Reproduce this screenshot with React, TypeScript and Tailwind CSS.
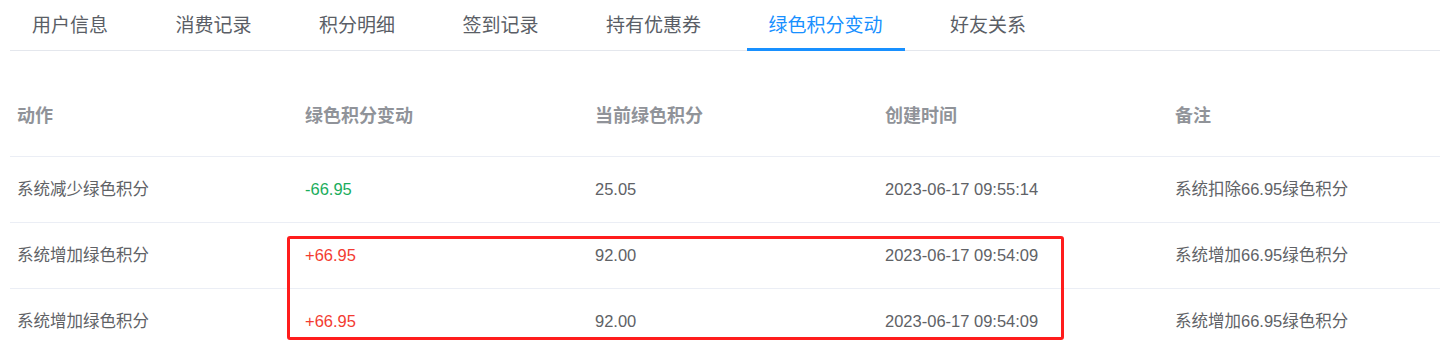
const tabs = ["用户信息", "消费记录", "积分明细", "签到记录", "持有优惠券", "绿色积分变动", "好友关系"];
const ACTIVE = 5;

type Row = {
  action: string;
  change: string;
  current: string;
  time: string;
  note: string;
};

const rows: Row[] = [
  { action: "系统减少绿色积分", change: "-66.95", current: "25.05", time: "2023-06-17 09:55:14", note: "系统扣除66.95绿色积分" },
  { action: "系统增加绿色积分", change: "+66.95", current: "92.00", time: "2023-06-17 09:54:09", note: "系统增加66.95绿色积分" },
  { action: "系统增加绿色积分", change: "+66.95", current: "92.00", time: "2023-06-17 09:54:09", note: "系统增加66.95绿色积分" },
];

const headers = ["动作", "绿色积分变动", "当前绿色积分", "创建时间", "备注"];
const grid = "grid grid-cols-[288px_290px_290px_290px_1fr]";

export default function App() {
  return (
    <div
      className="relative h-[351px] w-[1440px] overflow-hidden bg-white"
      style={{ fontFamily: '"Liberation Sans", "Noto Sans CJK SC", sans-serif' }}
    >
      <div className="pl-[10px]">
        <div className="flex h-[51px] gap-[23.5px] border-b border-[#e4e7ed]">
          {tabs.map((t, i) => (
            <div
              key={t}
              className={`relative flex h-full items-center px-[22px] pt-[3px] text-[19px] ${
                i === ACTIVE ? "text-[#1890ff]" : "text-[#5a5e66]"
              }`}
            >
              {t}
              {i === ACTIVE && (
                <span className="absolute bottom-[-1px] left-0 right-0 h-[3px] bg-[#1890ff]" />
              )}
            </div>
          ))}
        </div>

        <div className="mt-[25px]">
          <div className={`${grid} h-[81px] items-center border-b border-[#ebeef5]`}>
            {headers.map((h) => (
              <div key={h} className="px-[7px] text-[18px] font-bold text-[#909399]">
                {h}
              </div>
            ))}
          </div>
          {rows.map((r, i) => (
            <div key={i} className={`${grid} h-[66px] items-center border-b border-[#ebeef5] text-[16.5px] text-[#606266]`}>
              <div className="px-[7px]">{r.action}</div>
              <div className={`px-[7px] ${r.change.startsWith("-") ? "text-[#1aad5c]" : "text-[#f33b32]"}`}>
                {r.change}
              </div>
              <div className="px-[7px]">{r.current}</div>
              <div className="px-[7px]">{r.time}</div>
              <div className="px-[7px]">{r.note}</div>
            </div>
          ))}
        </div>
      </div>

      {/* annotation box */}
      <div className="pointer-events-none absolute left-[287px] top-[236px] h-[104px] w-[777px] rounded-[3px] border-[3px] border-[#ff1c1c]" />
    </div>
  );
}
